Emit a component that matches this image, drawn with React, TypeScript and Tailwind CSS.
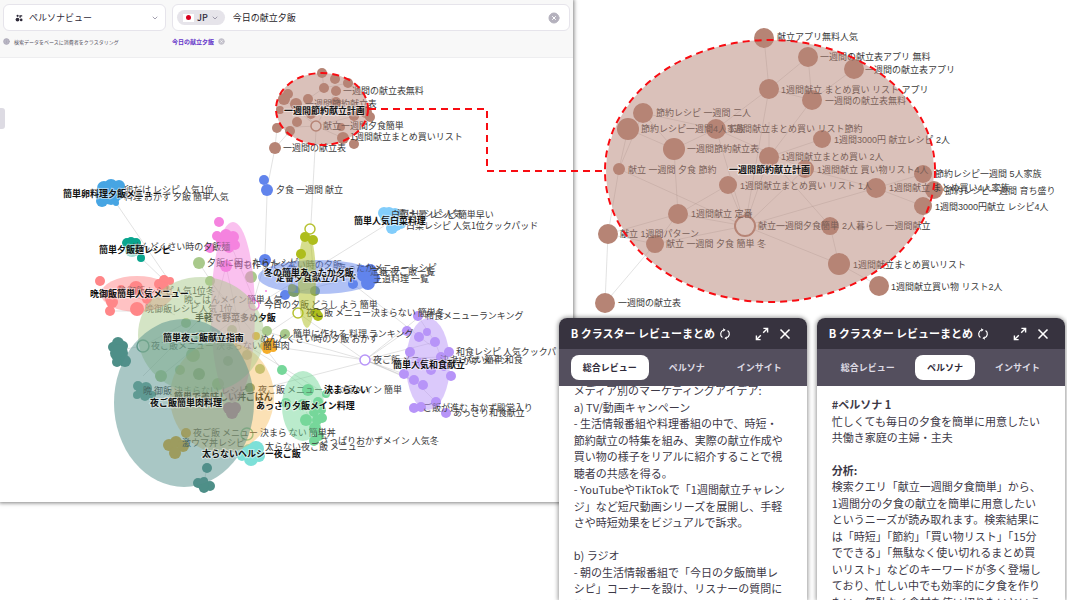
import { useState } from "react"
import { ChevronDown, CircleX, Info, X } from "lucide-react"

type Node = [number, number, number]
type Edge = [number, number, number, number]
type Label = [number, number, string]
type Group = { color: string; nodes: Node[] }
type Ring = [number, number, number, string]
type Area = { cx: number; cy: number; rx: number; ry: number; color: string; opacity: number }

const BROWN = "#b68475"

const leftGroups: Group[] = [
    {
        color: BROWN,
        nodes: [
            [322, 73, 5], [335, 79, 5], [348, 83, 5], [324, 88, 5], [336, 91, 5], [288, 94, 5], [284, 99, 6],
            [308, 99, 5], [296, 104, 6], [280, 110, 4], [297, 122, 5], [290, 131, 5], [277, 128, 5], [275, 148, 6],
            [343, 138, 6], [354, 144, 5], [311, 114, 5], [354, 116, 5], [366, 112, 6], [370, 117, 5], [341, 127, 4],
            [336, 102, 5],
        ],
    },
    {
        color: "#6184ec",
        nodes: [
            [264, 180, 5], [267, 190, 6], [265, 260, 6], [285, 295, 5], [353, 284, 5], [364, 275, 7], [370, 271, 7],
            [362, 270, 5], [368, 283, 7], [374, 278, 6], [291, 270, 5],
        ],
    },
    {
        color: "#47a5e3",
        nodes: [
            [104, 188, 7], [111, 186, 7], [119, 186, 6], [102, 201, 6], [111, 195, 10], [118, 194, 6], [116, 203, 3], [99, 195, 4],
        ],
    },
    { color: "#0aa58e", nodes: [[127, 243, 5], [131, 242, 5], [136, 243, 5], [132, 247, 6], [141, 258, 4]] },
    {
        color: "#f583df",
        nodes: [
            [219, 222, 5], [217, 236, 5], [226, 235, 6], [233, 237, 6], [222, 241, 6], [235, 245, 5], [210, 248, 5],
            [229, 248, 5], [226, 266, 6], [266, 291, 1], [232, 243, 6],
        ],
    },
    {
        color: "#ff8688",
        nodes: [
            [100, 281, 5], [136, 288, 7], [137, 309, 7], [110, 311, 5], [121, 289, 4], [159, 284, 5], [164, 280, 5],
            [170, 281, 4], [163, 287, 6], [112, 302, 6], [147, 299, 5], [110, 297, 6],
        ],
    },
    {
        color: "#a9c98b",
        nodes: [
            [199, 263, 6], [210, 281, 5], [251, 277, 6], [186, 323, 5], [193, 355, 7], [267, 331, 5], [285, 334, 5],
            [161, 376, 6], [180, 370, 5], [260, 369, 5], [232, 330, 5], [218, 384, 6],
        ],
    },
    { color: "#7c9d6d", nodes: [[294, 291, 6], [315, 291, 5], [199, 374, 6], [247, 355, 5], [228, 361, 5], [250, 388, 5]] },
    { color: "#aebd1c", nodes: [[305, 237, 5], [313, 240, 5], [301, 254, 5], [316, 313, 5], [318, 316, 5], [292, 288, 4]] },
    { color: "#82cdfb", nodes: [[384, 213, 6], [389, 213, 6], [395, 214, 6], [386, 218, 6], [392, 228, 6], [396, 225, 6], [401, 224, 5]] },
    {
        color: "#4e8f88",
        nodes: [
            [118, 343, 6], [113, 347, 5], [123, 346, 5], [119, 353, 9], [125, 361, 6], [117, 362, 5],
            [207, 468, 5], [198, 483, 5], [204, 481, 4], [210, 486, 5], [204, 488, 5], [203, 484, 6],
        ],
    },
    { color: "#6ba59a", nodes: [[138, 386, 5], [146, 388, 6], [137, 395, 4], [145, 396, 5], [142, 391, 6], [152, 395, 4]] },
    { color: "#e6a832", nodes: [[186, 433, 5], [169, 445, 6], [176, 442, 6], [183, 446, 6], [175, 453, 6]] },
    { color: "#f5ad2b", nodes: [[264, 346, 4], [270, 343, 5], [273, 348, 4], [267, 349, 5], [256, 336, 4]] },
    { color: "#7de0d8", nodes: [[242, 456, 5], [249, 451, 7], [256, 449, 8], [259, 456, 6], [251, 459, 7]] },
    { color: "#c276be", nodes: [[229, 408, 6], [235, 408, 6], [232, 413, 6]] },
    {
        color: "#76d79a",
        nodes: [
            [282, 370, 5], [308, 390, 6], [286, 403, 5], [318, 402, 5], [303, 405, 6], [326, 394, 4], [306, 420, 6],
            [314, 412, 5], [322, 410, 4], [322, 418, 5], [315, 428, 6], [314, 441, 5], [319, 436, 5], [317, 420, 5],
        ],
    },
    {
        color: "#b794f8",
        nodes: [
            [418, 316, 5], [407, 331, 5], [419, 337, 5], [427, 332, 4], [435, 342, 5], [410, 352, 5], [449, 352, 5],
            [441, 357, 5], [431, 370, 5], [404, 374, 5], [414, 380, 5], [423, 385, 5], [451, 376, 5], [436, 402, 5],
            [414, 408, 5], [421, 407, 5], [446, 413, 5], [444, 366, 5], [420, 363, 5],
        ],
    },
]

const leftRings: Ring[] = [
    [316, 126, 5, BROWN],
    [310, 229, 5, "#b7c233"],
    [298, 313, 5, "#b7c233"],
    [254, 305, 5, "#f583df"],
    [143, 346, 6, "#6fa58d"],
    [365, 360, 5, "#b794f8"],
    [247, 434, 6, "#76c7a0"],
    [201, 336, 5, "#9ec18f"],
]

const leftEdges: Edge[] = [
    [277, 128, 275, 148], [290, 131, 275, 148], [275, 148, 268, 184], [316, 131, 311, 224], [267, 196, 265, 256],
    [116, 203, 170, 282], [141, 258, 164, 280], [384, 226, 265, 300], [265, 262, 254, 300], [365, 360, 418, 318],
    [365, 360, 407, 331], [365, 360, 435, 342], [365, 360, 404, 374], [365, 360, 414, 380], [365, 360, 423, 385],
    [365, 360, 441, 357], [365, 360, 270, 346], [365, 360, 298, 313], [298, 313, 250, 345], [246, 345, 326, 394],
    [260, 330, 365, 360], [418, 316, 435, 342], [435, 342, 441, 357], [414, 380, 436, 402], [436, 402, 446, 413],
    [143, 346, 120, 350], [143, 346, 186, 323], [143, 376, 199, 320], [161, 376, 199, 345], [207, 468, 204, 482],
    [353, 284, 430, 345], [110, 311, 145, 311], [121, 290, 175, 315], [136, 287, 160, 300], [210, 281, 251, 330],
    [226, 266, 210, 330], [226, 266, 240, 330], [233, 250, 254, 300], [199, 263, 230, 310], [254, 305, 200, 345],
    [282, 370, 308, 390], [303, 405, 314, 428], [256, 336, 282, 370], [260, 389, 365, 362], [301, 254, 294, 288],
    [310, 234, 315, 290], [265, 260, 291, 270], [285, 295, 364, 275], [316, 126, 297, 104], [316, 126, 343, 138],
    [316, 126, 366, 113], [316, 126, 336, 91], [316, 126, 284, 99], [316, 126, 277, 128], [324, 88, 348, 83],
    [322, 73, 324, 88], [308, 99, 324, 88],
]

const leftLabels: Label[] = [
    [343, 91, "一週間の献立表無料"],
    [305, 104, "一週間節約献立表"],
    [323, 126, "献立一週間夕食簡単"],
    [350, 137, "1週間献立まとめ買いリスト"],
    [283, 148, "一週間の献立表"],
    [276, 190, "夕食 一週間 献立"],
    [124, 190, "卵だけ レシピ 人気1位"],
    [124, 197, "料理 おかず 夕飯 簡単人気"],
    [132, 247, "めんどくさい時の夕飯麺"],
    [118, 291, "晩御飯 レシピ人気1位冬"],
    [184, 300, "晩ごはんメイン簡単人気"],
    [145, 309, "晩御飯レシピ人気 1位"],
    [207, 263, "夕飯に困ったら レシピ"],
    [234, 265, "何も作りたくない時の夕飯"],
    [338, 268, "あったかメニューレシピ"],
    [370, 272, "定番 夜ご飯一覧"],
    [373, 279, "王道料理 一覧"],
    [391, 215, "白菜大量 レシピ 簡単早い"],
    [397, 214, "漬けレシピ 人気"],
    [406, 226, "白菜レシピ 人気1位クックパッド"],
    [264, 305, "今日の夕飯 どうし よう 簡単"],
    [306, 313, "夜ご飯 メニュー決まらない 簡単冬"],
    [425, 316, "和食メニューランキング"],
    [151, 346, "夜ご飯メニュー 決まらない 簡単肉"],
    [293, 334, "簡単に作れる 料理 ランキング"],
    [260, 339, "めんどくさい時の夕飯 おかず"],
    [373, 360, "夜ご飯 メニュー 決まらない簡単 和食"],
    [456, 352, "和食レシピ 人気クックパ"],
    [453, 361, "おかず メイン"],
    [143, 391, "晩 御飯 決まらない レシピ"],
    [258, 390, "夜ご飯 メニュー"],
    [326, 390, "らな飯 メイン 簡単"],
    [423, 408, "ご飯が進む おかず殿堂入り"],
    [453, 413, "あっさり和食献立"],
    [320, 441, "さっぱりおかずメイン 人気冬"],
    [265, 447, "太らない夜ご飯 メニュー"],
    [193, 433, "夜ご飯 メニュー 決まら ない 簡単丼"],
    [182, 443, "激ウマ丼レシピ"],
]

// titles that the cluster areas partly cover
const leftCoveredTitles: Label[] = [
    [195, 318, "手軽で野菜多め夕飯"],
    [174, 397, "簡単で美味しい丼ごはん"],
]

const leftTitles: Label[] = [
    [284, 111, "一週間節約献立計画"],
    [63, 194, "簡単卵料理夕飯メニュー"],
    [99, 250, "簡単夕飯麺レシピ"],
    [90, 294, "晩御飯簡単人気メニュー"],
    [354, 221, "簡単人気白菜料理"],
    [276, 278, "定番夕食献立ガイド"],
    [264, 273, "冬の簡単あったか夕飯"],
    [163, 338, "簡単夜ご飯献立指南"],
    [393, 365, "簡単人気和食献立"],
    [324, 390, "決まらない"],
    [256, 406, "あっさり夕飯メイン料理"],
    [150, 403, "夜ご飯簡単肉料理"],
    [202, 454, "太らないヘルシー夜ご飯"],
]

const leftAreas: Area[] = [
    { cx: 322, cy: 109, rx: 46, ry: 36, color: BROWN, opacity: 0.5 },
    { cx: 132, cy: 251, rx: 7, ry: 6, color: "#0aa58e", opacity: 0.4 },
    { cx: 137, cy: 294, rx: 36, ry: 18, color: "#ff8688", opacity: 0.5 },
    { cx: 233, cy: 312, rx: 22, ry: 90, color: "#f583df", opacity: 0.5 },
    { cx: 318, cy: 277, rx: 60, ry: 17, color: "#6184ec", opacity: 0.5 },
    { cx: 307, cy: 280, rx: 9, ry: 48, color: "#aebd1c", opacity: 0.5 },
    { cx: 428, cy: 364, rx: 22, ry: 46, color: "#b794f8", opacity: 0.5 },
    { cx: 303, cy: 406, rx: 21, ry: 35, color: "#76d79a", opacity: 0.5 },
    { cx: 222, cy: 397, rx: 52, ry: 56, color: "#f5b547", opacity: 0.4 },
    { cx: 201, cy: 335, rx: 63, ry: 58, color: "#a9c98b", opacity: 0.5 },
    { cx: 184, cy: 403, rx: 70, ry: 84, color: "#548f8b", opacity: 0.5 },
]

const rightNodes: Node[] = [
    [764, 38, 10], [808, 57, 10], [854, 69, 10], [769, 89, 10], [812, 100, 10], [643, 113, 10], [628, 129, 11],
    [716, 129, 10], [674, 149, 11], [822, 139, 9], [769, 157, 10], [805, 169, 9], [619, 169, 6], [728, 185, 9],
    [678, 214, 10], [608, 234, 10], [655, 244, 9], [830, 226, 9], [839, 264, 11], [879, 286, 10], [605, 303, 10],
    [876, 188, 10], [923, 174, 9], [934, 190, 9], [923, 206, 9],
]

const rightEdges: Edge[] = [
    [764, 38, 769, 89], [769, 89, 808, 57], [808, 57, 812, 100], [812, 100, 854, 69], [769, 89, 812, 100],
    [769, 89, 716, 129], [643, 113, 716, 129], [643, 113, 674, 149], [628, 129, 674, 149], [628, 129, 619, 169],
    [643, 113, 619, 169], [674, 149, 716, 129], [716, 129, 805, 169], [716, 129, 745, 226], [769, 122, 769, 157],
    [769, 157, 745, 226], [769, 157, 822, 139], [812, 100, 769, 157], [805, 169, 745, 226], [728, 185, 745, 226],
    [728, 185, 678, 214], [619, 169, 745, 226], [674, 149, 678, 214], [619, 169, 608, 234], [678, 214, 745, 226],
    [678, 214, 608, 234], [678, 214, 655, 244], [655, 244, 745, 226], [608, 234, 655, 244], [608, 234, 605, 303],
    [655, 244, 605, 303], [745, 226, 830, 226], [745, 226, 839, 264], [745, 226, 876, 188], [830, 226, 839, 264],
    [839, 264, 879, 286], [876, 188, 923, 174], [876, 188, 923, 206], [805, 169, 876, 188], [769, 157, 830, 226],
    [769, 89, 745, 226],
]

const rightLabels: Label[] = [
    [777, 37, "献立アプリ無料人気"],
    [820, 57, "一週間の献立表アプリ 無料"],
    [865, 70, "一週間の献立表アプリ"],
    [781, 90, "1週間献立 まとめ買い リスト アプリ"],
    [825, 101, "一週間の献立表無料"],
    [656, 113, "節約レシピ 一週間 二人"],
    [641, 129, "節約レシピ一週間4人家族"],
    [729, 129, "1週間献立まとめ買い リスト節約"],
    [687, 149, "一週間節約献立表"],
    [834, 140, "1週間3000円 献立レシピ 2人"],
    [781, 157, "1週間献立まとめ買い 2人"],
    [817, 170, "1週間献立 買い物リスト4人"],
    [628, 170, "献立 一週間 夕食 節約"],
    [740, 186, "1週間献立まとめ買い リスト 1人"],
    [691, 214, "1週間献立 定番"],
    [620, 234, "献立 1週間パターン"],
    [666, 244, "献立 一週間 夕食 簡単 冬"],
    [758, 226, "献立一週間夕食簡単"],
    [842, 226, "2人暮らし 一週間献立"],
    [853, 265, "1週間献立まとめ買いリスト"],
    [891, 287, "1週間献立買い物 リスト2人"],
    [618, 303, "一週間の献立表"],
    [935, 174, "節約レシピ一週間 5人家族"],
    [889, 188, "1週間献立 まとめ買い4人家族"],
    [945, 191, "節約レシピ一週間 育ち盛り"],
    [935, 207, "1週間3000円献立 レシピ4人"],
]

const summaryText = `メディア別のマーケティングアイデア:
a) TV/動画キャンペーン
- 生活情報番組や料理番組の中で、時短・
節約献立の特集を組み、実際の献立作成や
買い物の様子をリアルに紹介することで視
聴者の共感を得る。
- YouTubeやTikTokで「1週間献立チャレン
ジ」など短尺動画シリーズを展開し、手軽
さや時短効果をビジュアルで訴求。

b) ラジオ
- 朝の生活情報番組で「今日の夕飯簡単レ
シピ」コーナーを設け、リスナーの質問に
答えながら献立提案を行う。`

const personaIntro = `忙しくても毎日の夕食を簡単に用意したい
共働き家庭の主婦・主夫`

const personaAnalysis = `検索クエリ「献立一週間夕食簡単」から、
1週間分の夕食の献立を簡単に用意したい
というニーズが読み取れます。検索結果に
は「時短」「節約」「買い物リスト」「15分
でできる」「無駄なく使い切れるまとめ買
いリスト」などのキーワードが多く登場し
ており、忙しい中でも効率的に夕食を作り
たい、無駄なく食材を使い切りたいという`

function Edges({ edges }: { edges: Edge[] }) {
    return (
        <g stroke="#888" strokeOpacity={0.35} strokeWidth={0.7}>
            {edges.map(([x1, y1, x2, y2], i) => (
                <line key={i} x1={x1} y1={y1} x2={x2} y2={y2} />
            ))}
        </g>
    )
}

function Circles({ nodes, color }: { nodes: Node[]; color: string }) {
    return (
        <g fill={color}>
            {nodes.map(([cx, cy, r], i) => (
                <circle key={i} cx={cx} cy={cy} r={r} />
            ))}
        </g>
    )
}

function Labels({ labels }: { labels: Label[] }) {
    return (
        <g className="fill-[#3a3a3a] text-[9px]">
            {labels.map(([x, y, text]) => (
                <text key={text + x} x={x} y={y + 3}>{text}</text>
            ))}
        </g>
    )
}

function Titles({ labels }: { labels: Label[] }) {
    return (
        <g className="fill-[#111] text-[9px] font-bold" stroke="#fff" strokeOpacity={0.5} strokeWidth={2} paintOrder="stroke">
            {labels.map(([x, y, text]) => (
                <text key={text} x={x} y={y + 3}>{text}</text>
            ))}
        </g>
    )
}

function ClusterMap() {
    return (
        <svg viewBox="0 58 573 444" className="block w-full" role="img" aria-label="ペルソナビュー">
            <Edges edges={leftEdges} />
            {leftGroups.map((group) => (
                <Circles key={group.color} nodes={group.nodes} color={group.color} />
            ))}
            {leftRings.map(([cx, cy, r, color], i) => (
                <circle key={i} cx={cx} cy={cy} r={r} fill="#fff" stroke={color} strokeWidth={1.5} />
            ))}
            <Labels labels={leftLabels} />
            <Titles labels={leftCoveredTitles} />
            {leftAreas.map((area, i) => (
                <ellipse key={i} cx={area.cx} cy={area.cy} rx={area.rx} ry={area.ry} fill={area.color} fillOpacity={area.opacity} />
            ))}
            <Titles labels={leftTitles} />
            <path d="M0 108h2a3 3 0 0 1 3 3v15a3 3 0 0 1-3 3h-2z" fill="#dddbe3" />
        </svg>
    )
}

function ClusterDetail() {
    return (
        <svg viewBox="573 0 494 310" className="block w-full overflow-visible" role="img" aria-label="一週間節約献立計画">
            <Edges edges={rightEdges} />
            <Circles nodes={rightNodes} color={BROWN} />
            <circle cx={745} cy={226} r={10} fill="#fff" stroke={BROWN} strokeWidth={2} />
            <Labels labels={rightLabels} />
            <ellipse cx={770} cy={171} rx={164} ry={131} fill={BROWN} fillOpacity={0.5} />
            <Titles labels={[[729, 170, "一週間節約献立計画"]]} />
            <g fill="none" stroke="#f80c12" strokeWidth={2} strokeDasharray="7 5">
                <ellipse cx={770} cy={171} rx={165} ry={131} />
                <ellipse cx={322} cy={109} rx={46} ry={36} />
                <path d="M369 109H487V171H605" />
            </g>
        </svg>
    )
}

function ClusterIcon() {
    return (
        <svg viewBox="0 0 8 8" className="pointer-events-none absolute left-3 size-2" fill="#2f2b3a">
            <circle cx="2.6" cy="1.8" r="1.1" />
            <path d="M4.4 1.2h2.8v1.4H5.8v1.2H4.4z" />
            <circle cx="2.5" cy="5.6" r="1.9" />
            <circle cx="6.2" cy="5.9" r="1.3" />
        </svg>
    )
}

function RefreshIcon() {
    return (
        <svg viewBox="0 0 12 12" className="size-3" fill="none" stroke="currentColor" strokeWidth="1.2">
            <path d="M3.4 9.4A4.2 4.2 0 0 1 4.6 2" />
            <path d="M8.6 2.6A4.2 4.2 0 0 1 7.4 10" />
            <path d="M4 0.2L6.6 1.8L4.4 3.8z" fill="currentColor" stroke="none" />
            <path d="M8 11.8L5.4 10.2L7.6 8.2z" fill="currentColor" stroke="none" />
        </svg>
    )
}

function ExpandIcon() {
    return (
        <svg viewBox="0 0 14 14" className="size-3.5" fill="none" stroke="currentColor" strokeWidth="1.4">
            <path d="M8.4 1.4H12.6V5.6M12.4 1.6L8.2 5.8" />
            <path d="M5.6 12.6H1.4V8.4M1.6 12.4L5.8 8.2" />
        </svg>
    )
}

function Toolbar() {
    return (
        <header className="border-b border-[#eeeef0] bg-[#f8f8f8] px-[3px] pt-1 pb-[11px]">
            <div className="flex gap-1.5">
                <div className="w-[163px] shrink-0">
                    <div className="relative flex h-[27px] items-center">
                        <ClusterIcon />
                        <select aria-label="ビュー" className="h-full w-full appearance-none rounded-md border border-[#e6e4eb] bg-white pl-[25px] text-[9px] text-[#2f2b3a]">
                            <option>ペルソナビュー</option>
                        </select>
                        <ChevronDown className="pointer-events-none absolute right-[7px] size-2 text-[#77738a]" />
                    </div>
                    <p className="mt-1.5 flex items-center gap-1 text-[5px] leading-[9px] text-[#55515f]">
                        <Info className="size-[7px] fill-[#b9b6c4] text-[#a5a2b2]" />
                        検索データをベースに消費者をクラスタリング
                    </p>
                </div>
                <div className="flex-1">
                    <div className="flex h-[27px] items-center rounded-md border border-[#e6e4eb] bg-white pr-[9px] pl-1">
                        <button type="button" className="flex h-[15px] shrink-0 items-center gap-[3px] rounded-full bg-[#e6e4ea] px-1.5 text-[9px] font-medium text-[#2f2b3a]">
                            <span className="flex h-2 w-[11px] items-center justify-center bg-white">
                                <span className="size-[5px] rounded-full bg-[#d8001f]" />
                            </span>
                            JP
                            <ChevronDown className="size-2 text-[#77738a]" />
                        </button>
                        <input aria-label="検索キーワード" defaultValue="今日の献立夕飯" className="ml-2 min-w-0 flex-1 text-[9px] text-[#1f1c28] outline-none" />
                        <button type="button" aria-label="クリア">
                            <CircleX className="size-3 fill-[#b4b1bd] text-[#b4b1bd] [&>path]:stroke-white" />
                        </button>
                    </div>
                    <p className="mt-1.5 flex items-center gap-1 text-[6px] leading-[9px] font-bold text-[#6534c8]">
                        今日の献立夕飯
                        <button type="button" aria-label="今日の献立夕飯を削除">
                            <CircleX className="size-[7px] fill-[#c4c2cc] text-[#c4c2cc] [&>path]:stroke-white" />
                        </button>
                    </p>
                </div>
            </div>
        </header>
    )
}

const tabs = ["総合レビュー", "ペルソナ", "インサイト"]

function ReviewPanel({ initialTab, children }: { initialTab: string; children: React.ReactNode }) {
    const [active, setActive] = useState(initialTab)

    return (
        <section className="flex w-[23.3%] flex-col overflow-hidden rounded-t-lg bg-white shadow-[0_0_4px_1px_rgba(0,0,0,0.4)]">
            <div className="flex h-[31px] shrink-0 items-center bg-[#37333f] pr-3.5 pl-3 text-white">
                <h2 className="text-[11px] font-bold whitespace-nowrap">B クラスター レビューまとめ</h2>
                <button type="button" aria-label="更新" className="ml-1">
                    <RefreshIcon />
                </button>
                <button type="button" aria-label="拡大" className="ml-auto">
                    <ExpandIcon />
                </button>
                <button type="button" aria-label="閉じる" className="ml-2">
                    <X className="size-4" strokeWidth={2.5} />
                </button>
            </div>
            <div role="tablist" className="flex h-[37px] shrink-0 items-center gap-2 bg-[#544f5e] px-3">
                {tabs.map((tab) => (
                    <button
                        key={tab}
                        type="button"
                        role="tab"
                        aria-selected={tab === active}
                        onClick={() => setActive(tab)}
                        className={
                            tab === active
                                ? "h-[25px] rounded-lg bg-white px-3 text-[9px] font-bold whitespace-nowrap text-[#2f2b3a]"
                                : "h-[25px] rounded-lg px-3 text-[9px] font-bold whitespace-nowrap text-[#dedbe4]"
                        }
                    >
                        {tab}
                    </button>
                ))}
            </div>
            <div className="flex-1 overflow-hidden pl-[15px] text-[11px] leading-normal whitespace-pre text-[#3d3947]">{children}</div>
        </section>
    )
}

export default function App() {
    return (
        <main lang="ja" className="relative h-screen overflow-hidden bg-white font-['Liberation_Sans','Noto_Sans_CJK_JP',sans-serif]">
            <div className="flex items-start">
                <section className="w-[53.7%] shrink-0 bg-white font-['Noto_Sans_CJK_JP',sans-serif] shadow-[0_0_4px_1px_rgba(0,0,0,0.5)]">
                    <Toolbar />
                    <ClusterMap />
                </section>
                <section className="relative flex-1">
                    <ClusterDetail />
                </section>
            </div>
            <div className="absolute inset-x-0 bottom-0 flex h-[47%] justify-end gap-[10px] pr-0.5 font-['Noto_Sans_CJK_JP',sans-serif]">
                <ReviewPanel initialTab="総合レビュー">
                    <p className="-mt-1">{summaryText}</p>
                </ReviewPanel>
                <ReviewPanel initialTab="ペルソナ">
                    <div className="pt-2.5">
                        <h3 className="font-bold">#ペルソナ 1</h3>
                        <p>{personaIntro}</p>
                        <h3 className="mt-4 font-bold">分析:</h3>
                        <p>{personaAnalysis}</p>
                    </div>
                </ReviewPanel>
            </div>
        </main>
    )
}
